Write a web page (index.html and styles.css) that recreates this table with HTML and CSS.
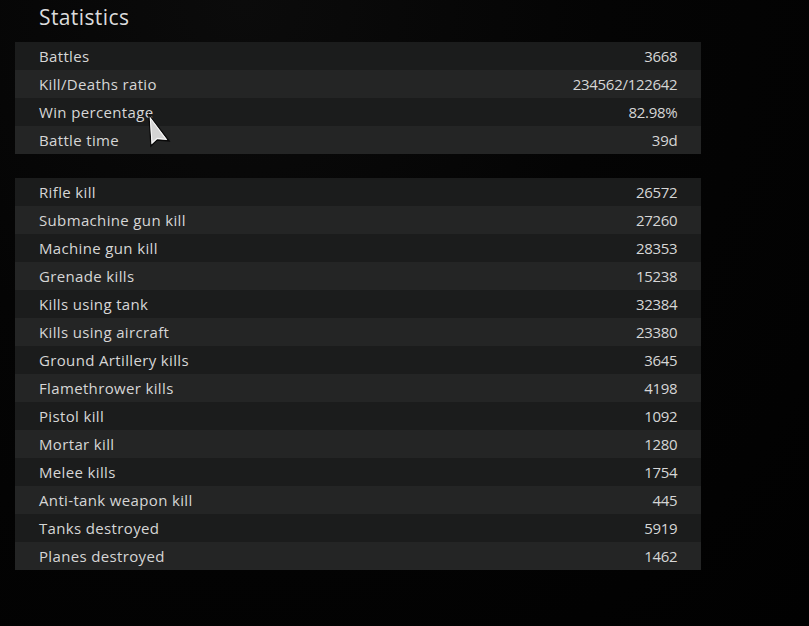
FILE: index.html
```html
<!DOCTYPE html>
<html>
<head>
<meta charset="utf-8">
<link rel="stylesheet" href="styles.css">
</head>
<body>
<div class="page">
  <h1 class="title">Statistics</h1>
  <div class="table">
    <div class="row"><span class="label">Battles</span><span class="value">3668</span></div>
    <div class="row"><span class="label">Kill/Deaths ratio</span><span class="value">234562/122642</span></div>
    <div class="row"><span class="label">Win percentage</span><span class="value">82.98%</span></div>
    <div class="row"><span class="label">Battle time</span><span class="value">39d</span></div>
  </div>
  <div class="table">
    <div class="row"><span class="label">Rifle kill</span><span class="value">26572</span></div>
    <div class="row"><span class="label">Submachine gun kill</span><span class="value">27260</span></div>
    <div class="row"><span class="label">Machine gun kill</span><span class="value">28353</span></div>
    <div class="row"><span class="label">Grenade kills</span><span class="value">15238</span></div>
    <div class="row"><span class="label">Kills using tank</span><span class="value">32384</span></div>
    <div class="row"><span class="label">Kills using aircraft</span><span class="value">23380</span></div>
    <div class="row"><span class="label">Ground Artillery kills</span><span class="value">3645</span></div>
    <div class="row"><span class="label">Flamethrower kills</span><span class="value">4198</span></div>
    <div class="row"><span class="label">Pistol kill</span><span class="value">1092</span></div>
    <div class="row"><span class="label">Mortar kill</span><span class="value">1280</span></div>
    <div class="row"><span class="label">Melee kills</span><span class="value">1754</span></div>
    <div class="row"><span class="label">Anti-tank weapon kill</span><span class="value">445</span></div>
    <div class="row"><span class="label">Tanks destroyed</span><span class="value">5919</span></div>
    <div class="row"><span class="label">Planes destroyed</span><span class="value">1462</span></div>
  </div>
</div>
<svg class="cursor" width="26" height="38" viewBox="0 0 26 38">
  <polygon points="2,2 4,33 10,27 22,28" fill="#d4d4d4" stroke="#0a0a0a" stroke-width="1.4" stroke-linejoin="miter"/>
  <polygon points="3.3,5 5,30 10.2,25.3 19,26.2" fill="none" stroke="#f6f6f6" stroke-width="1.1"/>
</svg>
</body>
</html>
```
FILE: styles.css
```css
html, body {
  margin: 0;
  padding: 0;
}
body {
  width: 809px;
  height: 626px;
  overflow: hidden;
  background: radial-gradient(ellipse at 30% 0%, #0b0b0b 0%, #040404 45%, #010101 100%);
  font-family: "Open Sans", "DejaVu Sans", sans-serif;
  color: #d6d6d6;
  position: relative;
}
.page {
  width: 686px;
  margin-left: 15px;
  display: flex;
  flex-direction: column;
  gap: 24px;
}
.title {
  margin: 0 0 -24px 0;
  height: 42px;
  box-sizing: border-box;
  padding: 2px 0 0 24px;
  font-size: 21px;
  line-height: 30px;
  font-weight: 400;
  letter-spacing: 0.4px;
  color: #dcdcdc;
}
.table {
  display: flex;
  flex-direction: column;
}
.row {
  height: 28px;
  display: flex;
  justify-content: space-between;
  align-items: center;
  padding: 0 24px;
  font-size: 15px;
  background: #1b1c1c;
}
.row:nth-child(even) {
  background: #242525;
}
.label {
  letter-spacing: 0.35px;
}
.value {
  letter-spacing: -0.3px;
  margin-right: -0.3px;
}
.cursor {
  position: absolute;
  left: 147px;
  top: 113px;
}
```
